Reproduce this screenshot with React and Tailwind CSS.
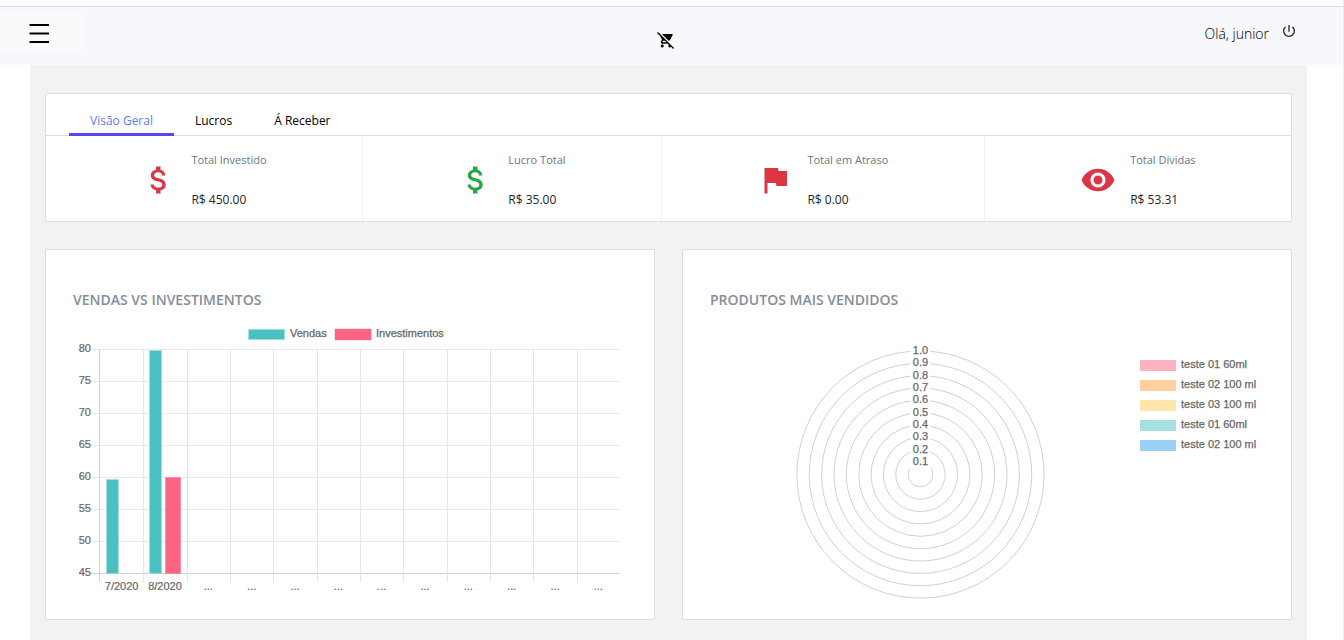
import {
  MdAttachMoney,
  MdFlag,
  MdPowerSettingsNew,
  MdRemoveRedEye,
  MdRemoveShoppingCart,
} from "react-icons/md";

const tabs = ["Visão Geral", "Lucros", "Á Receber"];

const stats = [
  { label: "Total Investido", value: "R$ 450.00", Icon: MdAttachMoney, color: "text-[#dc3545]" },
  { label: "Lucro Total", value: "R$ 35.00", Icon: MdAttachMoney, color: "text-[#28a745]" },
  { label: "Total em Atraso", value: "R$ 0.00", Icon: MdFlag, color: "text-[#dc3545]" },
  { label: "Total Dívidas", value: "R$ 53.31", Icon: MdRemoveRedEye, color: "text-[#dc3545]" },
];

const months = ["7/2020", "8/2020", ...Array(10).fill("...")];

const products = [
  { name: "teste 01 60ml", color: "#ffb1c1" },
  { name: "teste 02 100 ml", color: "#ffcf9f" },
  { name: "teste 03 100 ml", color: "#ffe6aa" },
  { name: "teste 01 60ml", color: "#a5dfdf" },
  { name: "teste 02 100 ml", color: "#9ad0f5" },
];

const chartFont = "font-['Liberation_Sans',Arial,sans-serif] text-[11px]";

function SalesChart() {
  const left = 27;
  const right = 547;
  const top = 27;
  const bottom = 251;
  const step = (right - left) / 12;
  const ticks = [80, 75, 70, 65, 60, 55, 50, 45];
  const lineY = (i) => Math.round(top + (i * (bottom - top)) / 7) + 0.5;
  const lineX = (i) => (i === 0 ? left - 0.5 : Math.round(left + i * step) + 0.5);

  return (
    <svg viewBox="0 0 554 277" className={`block w-full ${chartFont}`} role="img" aria-label="Vendas vs Investimentos">
      <rect x="175.5" y="7.5" width="36" height="10" fill="#4bc0c0" stroke="#a5dfdf" />
      <text x="217" y="15" fill="#666" stroke="#666" strokeWidth="0.25">Vendas</text>
      <rect x="261.5" y="6.5" width="37" height="12" fill="#ff6384" stroke="#e5e5e5" />
      <text x="303" y="15" fill="#666" stroke="#666" strokeWidth="0.25">Investimentos</text>

      {ticks.map((t, i) => (
        <g key={t}>
          <line x1={left - 9} x2={right} y1={lineY(i)} y2={lineY(i)} stroke={i === 7 ? "#d2d2d2" : "#e9e9e9"} />
          <text x="18" y={lineY(i) + 2.5} textAnchor="end" fill="#666" stroke="#666" strokeWidth="0.2">{t}</text>
        </g>
      ))}
      {months.map((m, i) => (
        <g key={i}>
          <line x1={lineX(i)} x2={lineX(i)} y1={top} y2={bottom + 9} stroke={i === 0 ? "#d2d2d2" : "#e5e5e5"} />
          <text x={left + (i + 0.5) * step} y="268" textAnchor="middle" fill="#666" stroke="#666" strokeWidth="0.2">{m}</text>
        </g>
      ))}

      <rect x="33.5" y="157.5" width="12" height="94" fill="#4bc0c0" stroke="#a5dfdf" strokeWidth="0.5" />
      <rect x="76.5" y="28.5" width="12" height="223" fill="#4bc0c0" stroke="#a5dfdf" strokeWidth="0.5" />
      <rect x="92.5" y="155.5" width="15" height="96" fill="#ff6384" stroke="#ff8ba3" strokeWidth="1" />
    </svg>
  );
}

function ProductsChart() {
  const cx = 210.5;
  const cy = 152.5;
  const rings = Array.from({ length: 10 }, (_, i) => i + 1);

  return (
    <svg viewBox="0 0 554 277" className={`block w-full ${chartFont}`} role="img" aria-label="Produtos mais vendidos">
      {rings.map((n) => (
        <circle key={n} cx={cx} cy={cy} r={n * 12.36} fill="none" stroke="#d0d0d0" />
      ))}
      {rings.map((n) => (
        <g key={n}>
          <rect x={cx - 10} y={cy - n * 12.36 - 8} width="20" height="15" fill="#fff" />
          <text x={cx} y={Math.round(cy - n * 12.36) + 3} textAnchor="middle" fill="#666" stroke="#666" strokeWidth="0.25">
            {(n / 10).toFixed(1)}
          </text>
        </g>
      ))}
      {products.map((p, i) => (
        <g key={i}>
          <rect x="430" y={38 + i * 20} width="36" height="11" fill={p.color} />
          <text x="471" y={46 + i * 20} fill="#666" stroke="#666" strokeWidth="0.25">{p.name}</text>
        </g>
      ))}
    </svg>
  );
}

function ChartCard({ title, children }) {
  return (
    <section className="min-w-0 rounded-xs border border-[#dddddf] bg-white px-[27px] pt-10 pb-5">
      <h2 className="mb-3 text-sm leading-5 font-semibold text-[#858d98] uppercase">{title}</h2>
      {children}
    </section>
  );
}

export default function App() {
  return (
    <div className="flex min-h-screen flex-col border-r border-[#ececef] bg-white pt-1.5 font-['Open_Sans','Noto_Sans',sans-serif] text-[#212529]">
      <header className="grid h-[59px] grid-cols-[1fr_auto_1fr] items-start border-t border-[#dcdce0] bg-[#f7f7fc]">
        <div className="flex pt-1.5">
          <button type="button" aria-label="Menu" className="flex h-[38px] w-[84px] items-center bg-[#fafafc] pl-6 text-black">
            <svg viewBox="0 0 30 30" className="size-[30px]" fill="currentColor" aria-hidden="true">
              <path d="M5.500 7h19.500v2H5.500zM5.500 15.500h19.500v2H5.500zM5.500 24h19.500v2H5.500z" />
            </svg>
          </button>
        </div>
        <a href="#carrinho" aria-label="Carrinho" className="pt-6 pr-3 text-black">
          <MdRemoveShoppingCart className="size-[18px]" />
        </a>
        <div className="flex items-start justify-end gap-3 pt-4 pr-[46px]">
          <span className="text-sm leading-[22px] font-light text-black">Olá, junior</span>
          <button type="button" aria-label="Sair">
            <MdPowerSettingsNew className="size-4" />
          </button>
        </div>
      </header>

      <main className="mr-9 ml-[30px] flex-1 bg-[#f2f2f2] px-[15px] pt-7 pb-5">
        <section className="rounded-xs border border-[#dddddf] bg-white">
          <nav className="flex h-[42px] items-end border-b border-[#dddde2] px-[23px]">
            {tabs.map((tab, i) => (
              <a
                key={tab}
                href={`#tab-${i}`}
                className={
                  i === 0
                    ? "-mb-px flex h-8 items-start border-b-3 border-[#5548f5] px-[21px] pt-[7px] text-xs leading-5 text-[#5c7cfa]"
                    : "-mb-px flex h-8 items-start px-[21px] pt-[7px] text-xs leading-5 text-black"
                }
              >
                {tab}
              </a>
            ))}
          </nav>
          <div className="flex">
            {stats.map(({ label, value, Icon, color }) => (
              <div key={label} className="flex h-[85px] grow items-center justify-center gap-3.5 border-r border-[#f0f0f2] pt-0.5 last:border-r-0">
                <Icon className={`size-9 ${color}`} />
                <div className="flex flex-col gap-5">
                  <span className="text-[11px] leading-5 text-[#6c757d]">{label}</span>
                  <span className="text-xs leading-5">{value}</span>
                </div>
              </div>
            ))}
          </div>
        </section>

        <div className="mt-[27px] grid grid-cols-2 gap-[27px]">
          <ChartCard title="Vendas vs Investimentos">
            <SalesChart />
          </ChartCard>
          <ChartCard title="Produtos mais vendidos">
            <ProductsChart />
          </ChartCard>
        </div>
      </main>
    </div>
  );
}
